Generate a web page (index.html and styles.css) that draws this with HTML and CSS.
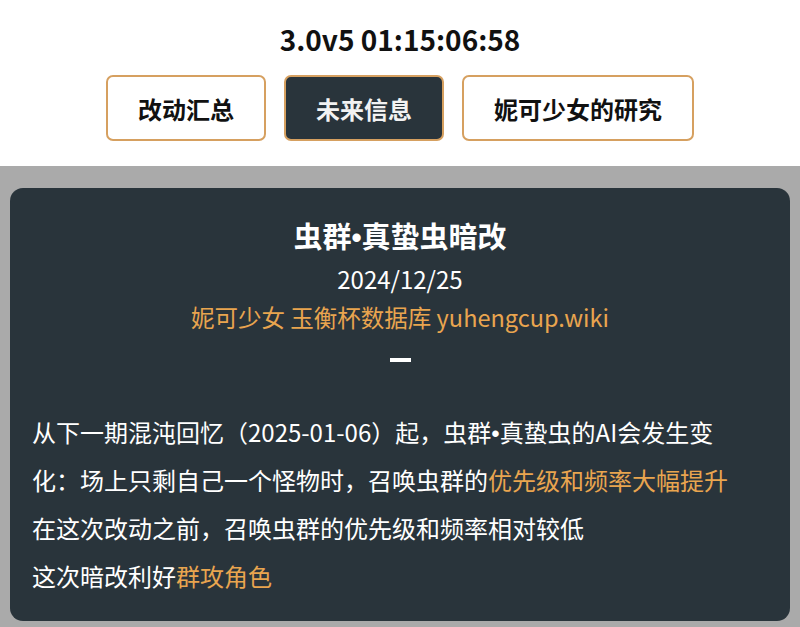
FILE: index.html
```html
<!DOCTYPE html>
<html lang="zh-CN">
<head>
<meta charset="utf-8">
<title>3.0v5</title>
<link rel="stylesheet" href="styles.css">
</head>
<body>
<header class="top">
  <h1 class="version">3.0v5 01:15:06:58</h1>
  <nav class="tabs">
    <a class="tab">改动汇总</a>
    <a class="tab tab-active">未来信息</a>
    <a class="tab">妮可少女的研究</a>
  </nav>
</header>
<main class="stage">
  <article class="card">
    <h2 class="card-title">虫群<span class="dot">•</span>真蛰虫暗改</h2>
    <div class="card-date">2024/12/25</div>
    <div class="card-source">妮可少女 玉衡杯数据库 yuhengcup.wiki</div>
    <div class="divider"></div>
    <div class="card-body">
      <p>从下一期混沌回忆（2025-01-06）起，虫群<span class="dot">•</span>真蛰虫的AI会发生变化：场上只剩自己一个怪物时，召唤虫群的<span class="hl">优先级和频率大幅提升</span></p>
      <p>在这次改动之前，召唤虫群的优先级和频率相对较低</p>
      <p>这次暗改利好<span class="hl">群攻角色</span></p>
    </div>
  </article>
</main>
</body>
</html>
```
FILE: styles.css
```css
html, body {
  margin: 0;
  padding: 0;
}
body {
  width: 800px;
  height: 627px;
  overflow: hidden;
  background: #aaaaaa;
  font-family: "Noto Sans CJK SC", "Noto Sans", sans-serif;
  color: #000;
}
.top {
  background: #ffffff;
  padding: 19px 0 25px;
  display: flex;
  flex-direction: column;
  align-items: center;
  gap: 16px;
}
.version {
  margin: 0;
  font-size: 28px;
  line-height: 40px;
  font-weight: 700;
  color: #111;
}
.tabs {
  display: flex;
  gap: 18px;
}
.tab {
  box-sizing: border-box;
  height: 66px;
  padding: 0 30px;
  display: flex;
  align-items: center;
  border: 2px solid #d6a060;
  border-radius: 7px;
  background: #fff;
  font-size: 24px;
  font-weight: 700;
  color: #111;
}
.tab-active {
  background: #29343b;
  color: #f2f2f2;
}
.stage {
  padding: 22px 10px 0;
}
.card {
  background: #29343b;
  border-radius: 13px;
  padding: 26px 22px 21px;
  color: #ffffff;
}
.card-title {
  margin: 0 0 4px;
  text-align: center;
  font-size: 29px;
  line-height: 42px;
  font-weight: 700;
}
.dot {
  font-family: "Liberation Sans", "Noto Sans", sans-serif;
  line-height: 0;
}
.card-date {
  text-align: center;
  font-size: 24px;
  line-height: 38px;
}
.card-source {
  text-align: center;
  font-size: 23.5px;
  line-height: 38px;
  color: #e9a54f;
}
.divider {
  width: 21px;
  height: 4px;
  background: #ffffff;
  margin: 22px auto 46px;
}
.card-body {
  margin-right: 30px;
}
.card-body p {
  margin: 0;
  font-size: 24px;
  line-height: 48px;
}
.hl {
  color: #e9a54f;
}
```
